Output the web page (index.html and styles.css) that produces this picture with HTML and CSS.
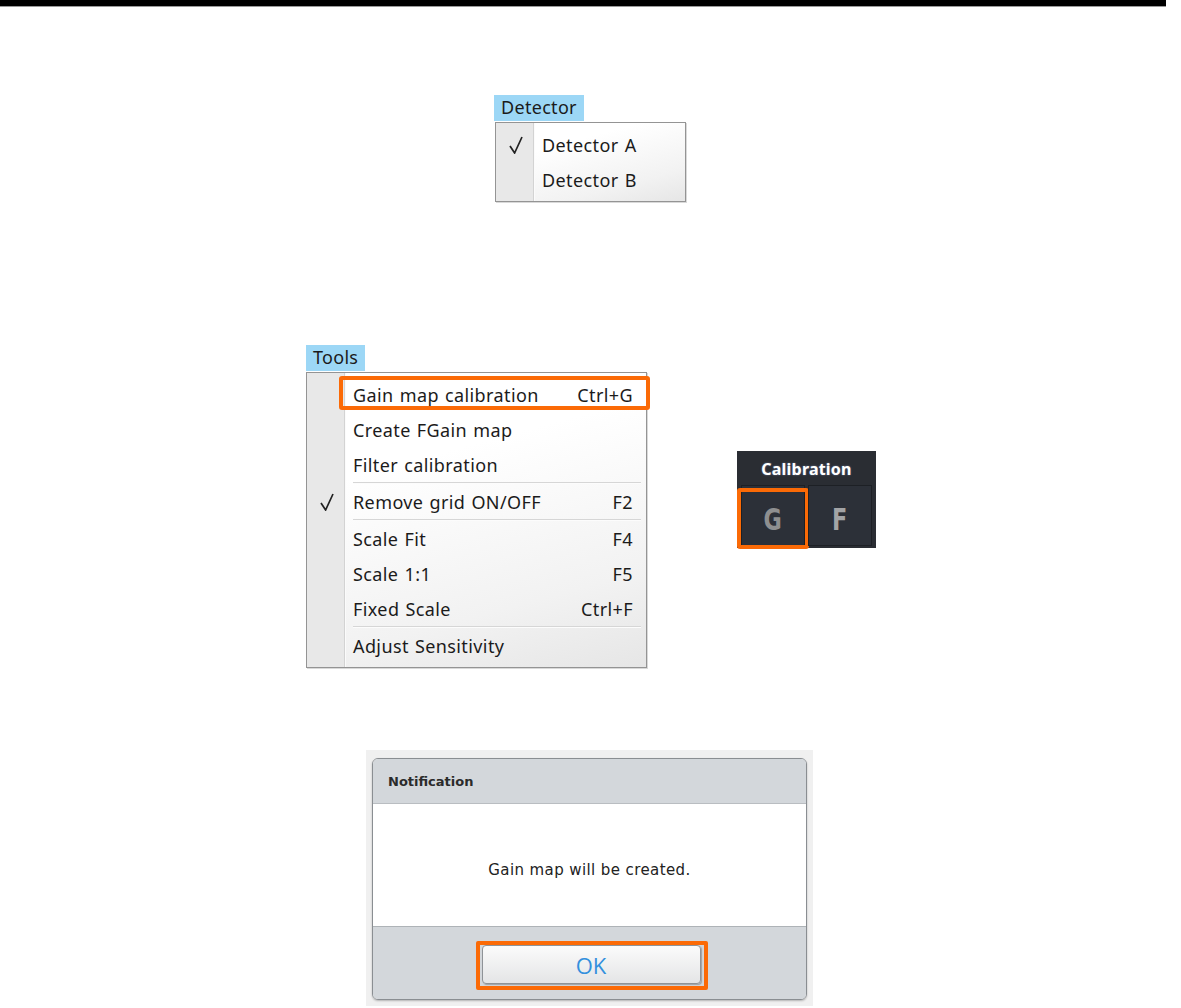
FILE: index.html
```html
<!DOCTYPE html>
<html>
<head>
<meta charset="utf-8">
<title>Menus</title>
<link rel="stylesheet" href="styles.css">
</head>
<body>
<div class="page">
  <div class="topbar"></div>

  <section class="fig fig-detector">
    <div class="menu-title">Detector</div>
    <div class="menu menu-detector">
      <div class="item"><span class="check"><svg width="14" height="18" viewBox="0 0 14 18"><path d="M1 10 L5.6 17 L13 1" fill="none" stroke="#222" stroke-width="1.7" stroke-linejoin="miter"/></svg></span><span class="label">Detector A</span></div>
      <div class="item"><span class="check"></span><span class="label">Detector B</span></div>
    </div>
  </section>

  <section class="fig fig-tools">
    <div class="tools-col">
      <div class="menu-title">Tools</div>
      <div class="menu menu-tools">
        <div class="item highlighted"><span class="check"></span><span class="label">Gain map calibration</span><span class="shortcut">Ctrl+G</span><span class="callout callout-item"></span></div>
        <div class="item"><span class="check"></span><span class="label">Create FGain map</span></div>
        <div class="item"><span class="check"></span><span class="label">Filter calibration</span></div>
        <div class="sep"></div>
        <div class="item"><span class="check"><svg width="14" height="18" viewBox="0 0 14 18"><path d="M1 10 L5.6 17 L13 1" fill="none" stroke="#222" stroke-width="1.7"/></svg></span><span class="label">Remove grid ON/OFF</span><span class="shortcut">F2</span></div>
        <div class="sep"></div>
        <div class="item"><span class="check"></span><span class="label">Scale Fit</span><span class="shortcut">F4</span></div>
        <div class="item"><span class="check"></span><span class="label">Scale 1:1</span><span class="shortcut">F5</span></div>
        <div class="item"><span class="check"></span><span class="label">Fixed Scale</span><span class="shortcut">Ctrl+F</span></div>
        <div class="sep"></div>
        <div class="item"><span class="check"></span><span class="label">Adjust Sensitivity</span></div>
      </div>
    </div>

    <div class="calib">
      <div class="calib-title">Calibration</div>
      <div class="calib-buttons">
        <div class="calib-btn btn-g"><span class="calib-letter">G</span><span class="callout callout-g"></span></div>
        <div class="calib-btn btn-f"><span class="calib-letter">F</span></div>
      </div>
    </div>
  </section>

  <section class="fig fig-dialog">
    <div class="halo">
      <div class="dialog">
        <div class="dialog-head">Notification</div>
        <div class="dialog-body">Gain map will be created.</div>
        <div class="dialog-foot">
          <div class="ok-frame"><button class="ok-btn">OK</button></div>
        </div>
      </div>
    </div>
  </section>
</div>
</body>
</html>
```

FILE: styles.css
```css
* { box-sizing: border-box; }

html, body {
  margin: 0;
  padding: 0;
  background: #fff;
}

body {
  font-family: "Noto Sans", "Open Sans", sans-serif;
  color: #1b1b1b;
}

.page {
  width: 1181px;
  height: 1008px;
  overflow: hidden;
}

.topbar {
  width: 1166px;
  height: 7px;
  background: #000;
  border-bottom: 1px solid #9a9a9a;
}

.fig { display: flex; }

/* ---------- Menus ---------- */
.fig-detector {
  flex-direction: column;
  align-items: flex-start;
  margin-top: 88px;
  padding-left: 494px;
}

.menu-title {
  display: inline-block;
  background: #9cd7f6;
  height: 26px;
  line-height: 25px;
  font-size: 18px;
  letter-spacing: 0.3px;
  padding: 0 7px 0 7px;
  color: #1b1b1b;
}

.menu {
  position: relative;
  margin-top: 1px;
  border: 1px solid #949494;
  padding: 4px 0;
  background:
    linear-gradient(to right, #e8e8e8 0 37px, #d3d3d3 37px 38px, #fbfbfb 38px 39px, transparent 39px),
    linear-gradient(165deg, #ffffff 30%, #f2f2f2 75%, #e6e6e6 100%);
  box-shadow: 1px 1px 0 rgba(0,0,0,0.15);
}

.menu-detector { width: 191px; margin-left: 1px; }

.item {
  position: relative;
  display: flex;
  align-items: center;
  height: 35px;
  font-size: 18px;
  letter-spacing: 0.4px;
  word-spacing: 1px;
  padding-right: 13px;
  white-space: nowrap;
}

.check {
  width: 38px;
  flex: none;
  display: flex;
  justify-content: center;
  align-items: center;
  padding-left: 1px;
  padding-top: 1px;
}

.label { margin-left: 8px; }

.shortcut { margin-left: auto; }

.sep {
  height: 2px;
  margin: 0 5px 0 46px;
  border-top: 1px solid #d6d6d6;
  border-bottom: 1px solid #fcfcfc;
}

.callout {
  position: absolute;
  border: 4px solid #fb6a06;
  border-radius: 3px;
  pointer-events: none;
}

.callout-item {
  left: 32px;
  top: -1px;
  width: 311px;
  height: 34px;
}

/* ---------- Tools row ---------- */
.fig-tools {
  margin-top: 143px;
  padding-left: 306px;
  align-items: flex-start;
}

.tools-col {
  display: flex;
  flex-direction: column;
  align-items: flex-start;
}

.menu-tools { width: 341px; }

.calib {
  margin-left: 90px;
  margin-top: 106px;
  width: 139px;
  height: 97px;
  background: #2a2d33;
  display: flex;
  flex-direction: column;
}

.calib-title {
  height: 34px;
  line-height: 36px;
  text-align: center;
  color: #fff;
  font-weight: 700;
  font-size: 16px;
  letter-spacing: 0.2px;
  text-shadow: 0 0 2px rgba(180,200,255,0.5);
}

.calib-buttons {
  display: flex;
  gap: 3px;
  padding: 0 4px;
}

.calib-btn {
  position: relative;
  width: 64px;
  height: 61px;
  background: #2c3038;
  border: 1px solid #1d2025;
  display: flex;
  align-items: center;
  justify-content: center;
  padding-top: 6px;
}

.calib-letter {
  display: inline-block;
  font-family: "DejaVu Sans", sans-serif;
  font-weight: 700;
  font-size: 31px;
  transform: scaleX(0.72);
}

.btn-g { color: #8e8f90; }
.btn-f { color: #a3a4a6; }

.callout-g {
  left: -5px;
  top: 2px;
  width: 72px;
  height: 61px;
}

/* ---------- Dialog ---------- */
.fig-dialog {
  margin-top: 82px;
  padding-left: 366px;
}

.halo {
  width: 447px;
  height: 256px;
  background: #f0f0f0;
  padding: 8px 6px 0 6px;
}

.dialog {
  width: 435px;
  border: 1px solid #8a8e92;
  border-radius: 6px;
  overflow: hidden;
  box-shadow: 0 1px 2px rgba(0,0,0,0.25);
  font-family: "DejaVu Sans", sans-serif;
}

.dialog-head {
  height: 45px;
  background: #d3d7db;
  border-bottom: 1px solid #b9bdc1;
  font-size: 13px;
  font-weight: 700;
  color: #2b2b2b;
  padding-left: 15px;
  line-height: 46px;
}

.dialog-body {
  height: 123px;
  background: #fff;
  border-bottom: 1px solid #aeb3b7;
  display: flex;
  align-items: center;
  justify-content: center;
  padding-top: 9px;
  font-size: 15px;
  letter-spacing: 0.4px;
  color: #222;
}

.dialog-foot {
  height: 72px;
  background: #d3d7db;
  display: flex;
  justify-content: center;
  padding-top: 14px;
  padding-left: 4px;
}

.ok-frame {
  border: 4px solid #fb6a06;
  border-radius: 2px;
  padding: 0 3px 2px 2px;
  height: 49px;
}

.ok-btn {
  width: 219px;
  height: 39px;
  border: 1px solid #8f9397;
  border-radius: 4px;
  background: linear-gradient(#fbfbfb, #e4e5e6);
  box-shadow: 1px 1px 1px rgba(0,0,0,0.25);
  font-family: "Open Sans", "Noto Sans", sans-serif;
  font-size: 22px;
  color: #3390dd;
  padding: 0;
}
```
